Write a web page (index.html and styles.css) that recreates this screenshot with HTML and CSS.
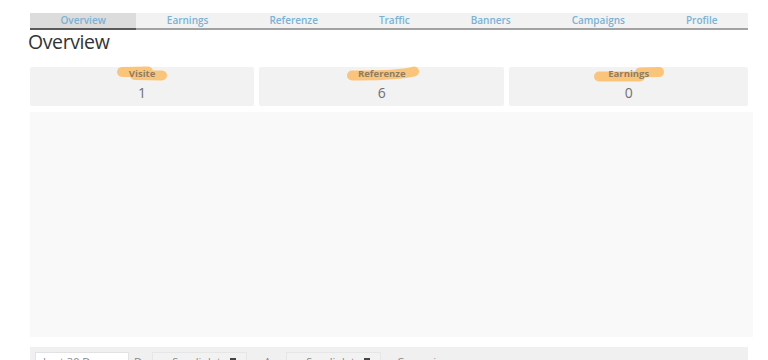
FILE: index.html
```html
<!DOCTYPE html>
<html lang="it">
<head>
<meta charset="utf-8">
<title>Overview</title>
<link rel="stylesheet" href="styles.css">
</head>
<body>
<div class="page">
  <nav class="tabs">
    <a class="tab active">Overview</a>
    <a class="tab">Earnings</a>
    <a class="tab">Referenze</a>
    <a class="tab">Traffic</a>
    <a class="tab">Banners</a>
    <a class="tab">Campaigns</a>
    <a class="tab">Profile</a>
  </nav>
  <h1 class="title">Overview</h1>
  <div class="stats">
    <div class="card">
      <div class="label">
        <svg class="mark" width="52" height="15" viewBox="0 0 52 15"><path d="M6 6 L32 5.5 M19 9 L46 9.5"/></svg>
        <span>Visite</span>
      </div>
      <div class="value">1</div>
    </div>
    <div class="card">
      <div class="label">
        <svg class="mark mark-ref" width="74" height="15" viewBox="0 0 74 15"><path d="M6 9.5 C26 9.5 50 10 68 5.5"/></svg>
        <span>Referenze</span>
      </div>
      <div class="value">6</div>
    </div>
    <div class="card">
      <div class="label">
        <svg class="mark" width="72" height="16" viewBox="0 0 72 16"><path d="M6 10.5 L47 10.5 M47 6.5 L66 6"/></svg>
        <span>Earnings</span>
      </div>
      <div class="value">0</div>
    </div>
  </div>
  <div class="chart"></div>
  <div class="filters">
    <div class="input">Last 30 Days</div>
    <span class="flabel flabel-from">Da</span>
    <div class="select select-from">Scegli data <span class="caret"></span></div>
    <span class="flabel flabel-to">A</span>
    <div class="select select-to">Scegli data <span class="caret"></span></div>
    <span class="flabel flabel-camp">Campaign</span>
  </div>
</div>
</body>
</html>
```
FILE: styles.css
```css
html, body {
  margin: 0;
  padding: 0;
  background: #ffffff;
  font-family: "Open Sans", "Liberation Sans", sans-serif;
  overflow: hidden;
}

.page {
  width: 718px;
  padding: 13px 0 0 30px;
}

.tabs {
  display: flex;
  height: 15px;
  background: #f2f2f2;
  border-bottom: 2px solid #a3a3a3;
}

.tab {
  flex: 1 1 auto;
  text-align: center;
  font-size: 10px;
  font-weight: 600;
  line-height: 15px;
  color: #78b3d6;
  position: relative;
}

.tab.active {
  background: #dcdcdc;
}

.tab.active::after {
  content: "";
  position: absolute;
  left: 0;
  right: 0;
  bottom: -2px;
  height: 2px;
  background: #5a5a5a;
}

.title {
  margin: 0 0 13px -2px;
  font-size: 19.5px;
  font-weight: 500;
  letter-spacing: -0.4px;
  line-height: 24px;
  color: #333333;
}

.stats {
  display: flex;
  gap: 5px;
}

.card {
  flex: 1 1 auto;
  height: 39px;
  box-sizing: border-box;
  padding-top: 1px;
  background: #f2f2f2;
  border-radius: 2px;
  text-align: center;
}

.label {
  position: relative;
  height: 12px;
  font-size: 9.5px;
  font-weight: 700;
  line-height: 12px;
  color: #8e7d62;
}

.label span {
  position: relative;
}

.mark {
  position: absolute;
  left: 50%;
  top: -2px;
  transform: translateX(-50%);
}

.mark path {
  fill: none;
  stroke: #fac57b;
  stroke-width: 10;
  stroke-linecap: round;
}

.mark-ref {
  margin-left: 1px;
}

.value {
  margin-top: 3px;
  font-size: 14px;
  line-height: 20px;
  color: #707070;
}

.chart {
  margin-top: 6px;
  width: 723px;
  height: 225px;
  background: #f9f9f9;
}

.filters {
  margin-top: 10px;
  height: 40px;
  box-sizing: border-box;
  padding: 5px;
  background: #f0f0f0;
  display: flex;
  align-items: flex-start;
}

.input {
  width: 94px;
  height: 28px;
  box-sizing: border-box;
  padding: 0 7px;
  background: #ffffff;
  border: 1px solid #e2e2e2;
  font-size: 11px;
  line-height: 18px;
  color: #888888;
}

.flabel {
  font-size: 11px;
  line-height: 20px;
  color: #888888;
}

.flabel-from {
  margin: 0 4px 0 5px;
}

.flabel-to {
  margin: 0 15px 0 17px;
}

.flabel-camp {
  margin-left: 16px;
}

.select {
  width: 95px;
  height: 28px;
  box-sizing: border-box;
  border: 1px solid #e6e6e6;
  background: #f2f2f2;
  font-size: 11px;
  line-height: 18px;
  color: #888888;
  text-align: center;
  position: relative;
}

.caret {
  position: absolute;
  right: 10px;
  top: 5px;
  width: 6px;
  height: 6px;
  background: #444444;
}
```
